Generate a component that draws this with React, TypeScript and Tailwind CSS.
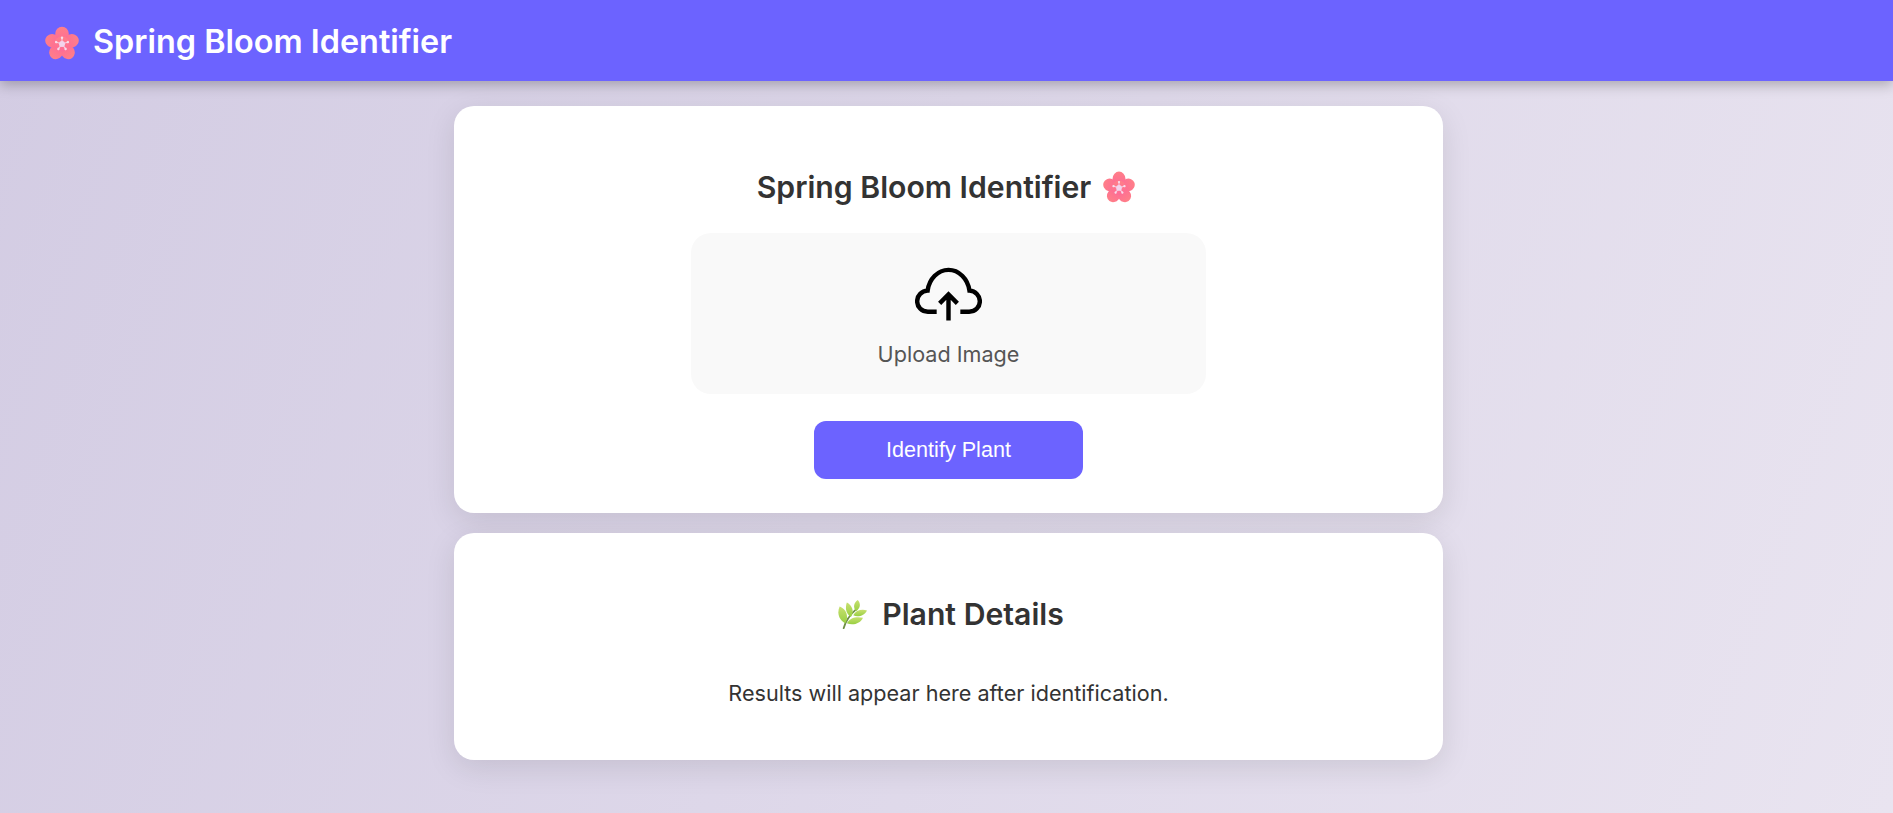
const FONT = "font-['Inter','Noto_Sans',sans-serif]";

function BlossomIcon({ className }: { className?: string }) {
  const petals = [0, 72, 144, 216, 288];
  return (
    <svg viewBox="0 0 36 36" className={className} aria-hidden="true">
      <defs>
        <linearGradient id="petal" x1="0" y1="0" x2="0" y2="1">
          <stop offset="0" stopColor="#ff7f88" />
          <stop offset="1" stopColor="#fd6b96" />
        </linearGradient>
      </defs>
      <g fill="url(#petal)">
        {petals.map((angle) => (
          <g key={angle} transform={`rotate(${angle} 18 19)`}>
            <ellipse cx="18" cy="8.500" rx="7.200" ry="7.800" />
          </g>
        ))}
        <circle cx="18" cy="19" r="8" />
      </g>
      {petals.map((angle) => (
        <g key={`s${angle}`} transform={`rotate(${angle} 18 19)`}>
          <path d="M18 19V13" stroke="#f8cfe3" strokeWidth="1.200" />
          <circle cx="18" cy="12.500" r="1.300" fill="#f8dcec" />
        </g>
      ))}
      <circle cx="18" cy="19" r="3.200" fill="#f3d3ec" />
    </svg>
  );
}

function HerbIcon({ className }: { className?: string }) {
  return (
    <svg viewBox="0 0 36 36" className={className} aria-hidden="true">
      <defs>
        <linearGradient id="leaf" x1="0" y1="0" x2="0" y2="1">
          <stop offset="0" stopColor="#c8e070" />
          <stop offset="1" stopColor="#98cf42" />
        </linearGradient>
      </defs>
      <path d="M7 35C9 27 16 17 24 10" fill="none" stroke="#6f8f45" strokeWidth="2.200" strokeLinecap="round" />
      <path d="M9 29C0 24-1 15 2 8c8 3 12 12 7 21Z" fill="url(#leaf)" />
      <path d="M16 21C9 16 9 9 11 3c6 3 10 11 5 18Z" fill="url(#leaf)" />
      <path d="M22.500 14C18 9 20 3 24.500 0c4 4 3.500 10-2 14Z" fill="url(#leaf)" />
      <path d="M19 19c3-6 10-8 17-6-3 6-11 9-17 6Z" fill="url(#leaf)" />
      <path d="M11 29c3-7 12-9 20-7-3 7-12 10-20 7Z" fill="url(#leaf)" />
    </svg>
  );
}

function CloudUploadIcon({ className }: { className?: string }) {
  return (
    <svg viewBox="0 0 68 56" fill="none" stroke="#000" strokeWidth="4.500" className={className} aria-hidden="true">
      <path d="M22 45H13C6.500 45 2.200 40 2.200 34.300 2.200 28.500 6.800 24 12.800 23.500 14.500 11.500 23.300 2.500 34 2.500c10.500 0 19.500 8.800 21.300 21 6 .5 10.500 5 10.500 10.800C65.800 40 61.500 45 55 45H46" />
      <path d="M34 54V28M25 36.500l9-9 9 9" />
    </svg>
  );
}

export default function App() {
  return (
    <div className={`${FONT} min-h-[813px] bg-[linear-gradient(110deg,#d3cce3,#e9e4f0)]`}>
      <header className="flex h-[81px] items-center gap-[14px] bg-[#6c63ff] pl-[45px] pt-1 shadow-[0_4px_12px_rgba(0,0,0,0.25)]">
        <BlossomIcon className="h-[34px] w-[34px]" />
        <h1 className="text-[32.400px] font-semibold text-white">Spring Bloom Identifier</h1>
      </header>

      <main className="flex flex-col items-center gap-5 pt-[25px] pl-1">
        <section className="flex h-[407px] w-[989px] flex-col items-center rounded-[20px] bg-white pt-[63px] shadow-[0_8px_30px_rgba(0,0,0,0.1)]">
          <h2 className="flex items-center gap-3 pr-[5px] text-[30.200px] font-semibold leading-[36px] text-[#333]">
            Spring Bloom Identifier
            <BlossomIcon className="h-[32px] w-[32px]" />
          </h2>
          <div className="mt-[28px] flex h-[161px] w-[515px] flex-col items-center rounded-[20px] bg-[#f9f9f9] pt-[34px]">
            <CloudUploadIcon className="h-[56px] w-[67px]" />
            <p className="mt-[15px] text-[21.600px] text-[#555]">Upload Image</p>
          </div>
          <button
            type="button"
            className="mt-[27px] h-[58px] w-[269px] rounded-xl bg-[#6c63ff] font-['Liberation_Sans',Arial,sans-serif] text-[21.600px] text-white"
          >
            Identify Plant
          </button>
        </section>

        <section className="flex h-[227px] w-[989px] flex-col items-center rounded-[20px] bg-white pt-[63px] shadow-[0_8px_30px_rgba(0,0,0,0.1)]">
          <h2 className="flex items-center gap-[15px] pl-[5px] text-[30.200px] font-semibold leading-[36px] text-[#333]">
            <HerbIcon className="h-[29px] w-[29px]" />
            Plant Details
          </h2>
          <p className="mt-[45px] text-[21.600px] text-[#333]">Results will appear here after identification.</p>
        </section>
      </main>
    </div>
  );
}
